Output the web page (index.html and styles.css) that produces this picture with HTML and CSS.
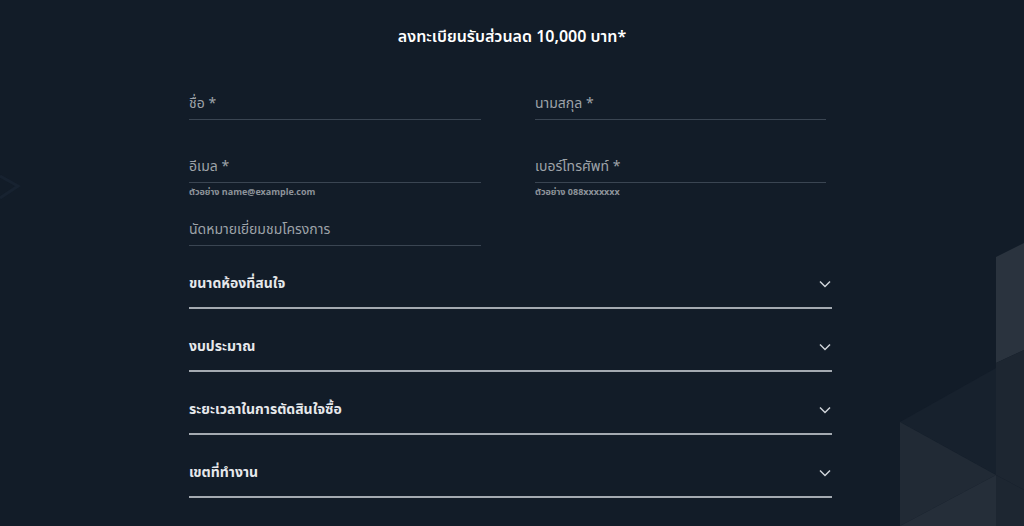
FILE: index.html
```html
<!DOCTYPE html>
<html lang="th">
<head>
<meta charset="utf-8">
<title>ลงทะเบียน</title>
<link rel="stylesheet" href="styles.css">
</head>
<body>
<svg class="deco" width="124" height="283" viewBox="900 243 124 283" aria-hidden="true">
  <polygon points="996,257 1024,243 1024,350 996,363" fill="#2a333e"/>
  <polygon points="996,363 1024,350 1024,490 996,475" fill="#1d2631"/>
  <polygon points="900,422 996,368 996,475" fill="#17212d"/>
  <polygon points="900,422 996,475 900,526" fill="#212a35"/>
  <polygon points="996,475 1024,490 1024,526 996,526" fill="#1d2631"/>
  <polygon points="900,526 996,475 996,526" fill="#252e39"/>
</svg>
<svg class="deco-left" width="30" height="40" viewBox="0 0 30 40" aria-hidden="true">
  <polyline points="0,8 18,18 0,30" fill="none" stroke="#172230" stroke-width="3"/>
</svg>
<main class="page">
  <h1 class="title">ลงทะเบียนรับส่วนลด 10,000 บาท*</h1>
  <form class="form">
    <div class="fields">
      <div class="field"><div class="input">ชื่อ *</div></div>
      <div class="field"><div class="input">นามสกุล *</div></div>
      <div class="field"><div class="input">อีเมล *</div><div class="hint">ตัวอย่าง name@example.com</div></div>
      <div class="field"><div class="input">เบอร์โทรศัพท์ *</div><div class="hint">ตัวอย่าง 088xxxxxxx</div></div>
      <div class="field"><div class="input">นัดหมายเยี่ยมชมโครงการ</div></div>
    </div>
    <div class="selects">
      <div class="select"><span>ขนาดห้องที่สนใจ</span><svg class="chev" width="12" height="8" viewBox="0 0 12 8"><polyline points="1,1.5 6,6.5 11,1.5"/></svg></div>
      <div class="select"><span>งบประมาณ</span><svg class="chev" width="12" height="8" viewBox="0 0 12 8"><polyline points="1,1.5 6,6.5 11,1.5"/></svg></div>
      <div class="select"><span>ระยะเวลาในการตัดสินใจซื้อ</span><svg class="chev" width="12" height="8" viewBox="0 0 12 8"><polyline points="1,1.5 6,6.5 11,1.5"/></svg></div>
      <div class="select"><span>เขตที่ทำงาน</span><svg class="chev" width="12" height="8" viewBox="0 0 12 8"><polyline points="1,1.5 6,6.5 11,1.5"/></svg></div>
    </div>
  </form>
</main>
</body>
</html>
```

FILE: styles.css
```css
html, body {
  margin: 0;
  padding: 0;
  height: 100%;
  overflow: hidden;
}
body {
  background: #121c28;
  font-family: "Noto Sans Thai", "Noto Sans", "DejaVu Sans", sans-serif;
  position: relative;
}
.deco {
  position: absolute;
  right: 0;
  bottom: 0;
  display: block;
}
.deco-left {
  position: absolute;
  left: 0;
  top: 168px;
}
.page {
  position: relative;
}
.title {
  margin: 0;
  padding-top: 27px;
  font-size: 16px;
  line-height: 20px;
  font-weight: 600;
  color: #ffffff;
  text-align: center;
}
.form {
  width: 643px;
  margin: 45px 0 0 189px;
}
.fields {
  display: grid;
  grid-template-columns: 292px 291px;
  grid-template-rows: 63px 63px auto;
  column-gap: 54px;
}
.input {
  font-size: 14px;
  line-height: 20px;
  color: #9ea3a9;
  padding-top: 2px;
  padding-bottom: 5px;
  border-bottom: 1px solid #3a4552;
}
.hint {
  margin-top: 3px;
  font-size: 9px;
  line-height: 12px;
  color: #8d939a;
  font-weight: 700;
}
.selects {
  display: flex;
  flex-direction: column;
  gap: 27px;
  margin-top: 27px;
}
.select {
  display: flex;
  justify-content: space-between;
  align-items: center;
  font-size: 14px;
  line-height: 20px;
  font-weight: 700;
  color: #e6e8eb;
  padding-top: 1px;
  padding-bottom: 13px;
  border-bottom: 2px solid #a4aab1;
}
.chev {
  margin-right: 1px;
}
.chev polyline {
  fill: none;
  stroke: #cfd3d8;
  stroke-width: 1.5;
}
```
